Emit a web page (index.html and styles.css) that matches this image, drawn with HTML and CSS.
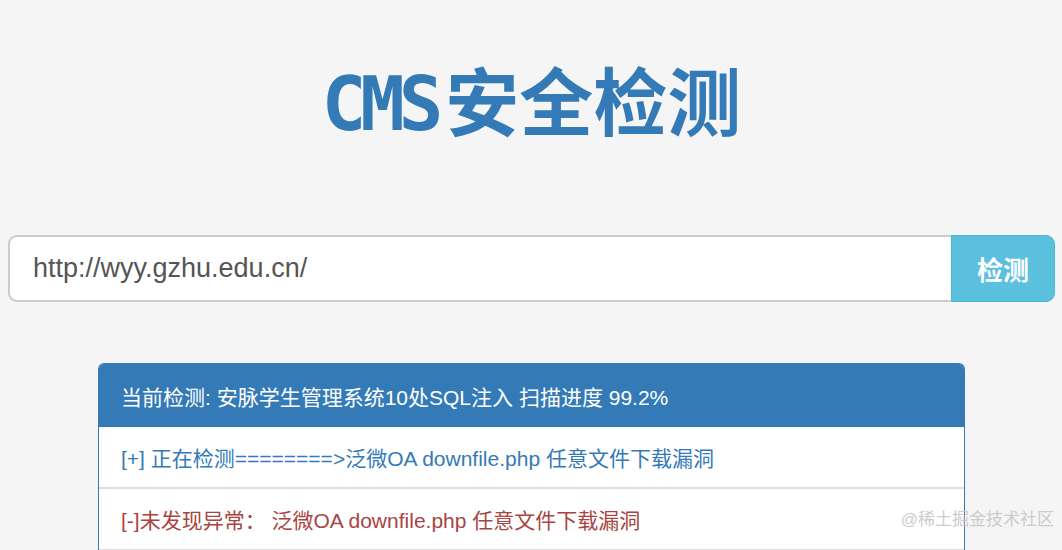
FILE: index.html
```html
<!DOCTYPE html>
<html>
<head>
    <title>CMS安全检测</title>
    <meta charset="utf-8">
    <link rel="stylesheet" href="styles.css">
</head>

<body>
    <div class="container">
        <h1 class="title"><span class="latin">CMS</span>安全检测</h1>

        <div class="input-group">
            <input type="text" id="target-url" name="target-url" value="http://wyy.gzhu.edu.cn/">
            <button id="scan-btn">检测</button>
        </div>

        <div class="panel">
            <div class="panel-heading">当前检测: 安脉学生管理系统10处SQL注入 扫描进度 99.2%</div>
            <ul class="list-group">
                <li class="item-info">[+] 正在检测========&gt;泛微OA downfile.php 任意文件下载漏洞</li>
                <li class="item-danger">[-]未发现异常： 泛微OA downfile.php 任意文件下载漏洞</li>
                <li class="item-danger"></li>
            </ul>
        </div>
    </div>

    <div class="watermark">@稀土掘金技术社区</div>
</body>

</html>
```

FILE: styles.css
```css
html, body {
    height: 100%;
}

body {
    margin: 0;
    overflow: hidden;
    font-family: 'Liberation Sans', 'Noto Sans CJK SC', sans-serif;
    background-color: #f5f5f5;
    color: #333;
}

.container {
    padding: 0 7px 0 8px;
}

.title {
    height: 74px;
    margin: 61px 0 100px;
    text-align: center;
    font-family: 'Noto Sans CJK SC', sans-serif;
    font-size: 74px;
    line-height: 74px;
    font-weight: bold;
    color: #337ab7;
}

.title .latin {
    font-family: 'DejaVu Sans Mono', monospace;
    line-height: 0;
    letter-spacing: -6px;
    margin-right: 8px;
}

.input-group {
    display: flex;
    height: 67px;
}

.input-group input {
    flex: 1;
    min-width: 0;
    margin: 0;
    padding: 0 23px;
    font-family: 'Liberation Sans', sans-serif;
    font-size: 27px;
    color: #555;
    background-color: #fff;
    border: 2px solid #ccc;
    border-right: none;
    border-radius: 9px 0 0 9px;
    box-sizing: border-box;
    outline: none;
}

.input-group button {
    width: 104px;
    font-family: 'Noto Sans CJK SC', sans-serif;
    font-size: 26px;
    font-weight: bold;
    color: #fff;
    background-color: #5bc0de;
    border: 1px solid #46b8da;
    border-radius: 0 9px 9px 0;
    cursor: pointer;
}

.panel {
    width: 867px;
    margin: 61px auto 0;
    border: 1px solid #337ab7;
    border-bottom: none;
    border-radius: 6px 6px 0 0;
    background-color: #fff;
    box-sizing: border-box;
}

.panel-heading {
    height: 63px;
    display: flex;
    align-items: center;
    padding: 0 22px;
    font-size: 21px;
    color: #fff;
    background-color: #337ab7;
    border-radius: 5px 5px 0 0;
}

.list-group {
    list-style: none;
    margin: 0;
    padding: 0;
}

.list-group li {
    height: 60px;
    display: flex;
    align-items: center;
    padding: 0 22px;
    font-size: 21px;
    border-bottom: 2px solid #ddd;
}

.item-info {
    color: #337ab7;
}

.item-danger {
    color: #a94442;
}

.watermark {
    position: absolute;
    right: 8px;
    bottom: 20px;
    font-size: 17px;
    color: #c8c8c8;
    opacity: 0.9;
}
```
